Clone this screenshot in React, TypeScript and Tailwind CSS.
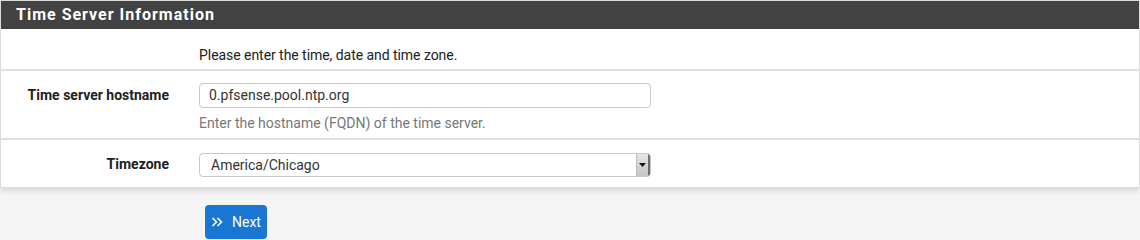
export default function App() {
	return (
		<div
			className="w-[1140px] h-[240px] bg-[#f5f5f5] text-[14px] text-[#212121] overflow-hidden"
			style={{ fontFamily: 'Roboto, "Liberation Sans", sans-serif' }}
		>
			<div className="w-[1140px] bg-white border border-[#dcdcdc] shadow-[0_3px_6px_rgba(0,0,0,0.12)]">
				<div className="h-[28px] bg-[#424242] px-[15px] flex items-center">
					<h2 className="text-[16px] font-bold text-white tracking-[1px] leading-none">
						Time Server Information
					</h2>
				</div>

				<div className="flex pt-[16px] pb-[4px] border-b-2 border-[#e0e0e0] leading-[20px]">
					<div className="w-[198px] shrink-0"></div>
					<div className="tracking-[-0.05px]">Please enter the time, date and time zone.</div>
				</div>

				<div className="flex pt-[12px] pb-[5px] border-b-2 border-[#e0e0e0]">
					<div className="w-[198px] shrink-0 pr-[30px] pt-[2px] text-right font-bold leading-[20px]">
						Time server hostname
					</div>
					<div className="w-[452px]">
						<div className="h-[25px] border border-[#c8c8c8] rounded-[4px] px-[9px] flex items-center text-[#333]">
							0.pfsense.pool.ntp.org
						</div>
						<div className="mt-[5px] leading-[20px] text-[#777]">
							Enter the hostname (FQDN) of the time server.
						</div>
					</div>
				</div>

				<div className="flex pt-[13px] pb-[10px]">
					<div className="w-[198px] shrink-0 pr-[30px] pt-[1px] text-right font-bold leading-[20px]">
						Timezone
					</div>
					<div className="w-[452px] h-[24px] border border-[#c8c8c8] rounded-[4px] flex items-stretch overflow-hidden">
						<div className="flex-1 pl-[11px] flex items-center text-[#333]">
							America/Chicago
						</div>
						<div className="w-[14px] bg-gradient-to-b from-[#e6e6e6] to-[#c4c4c4] border-l border-[#bdbdbd] border-r-2 border-r-[#6e6e6e] flex items-center justify-center">
							<svg width="7" height="4" viewBox="0 0 7 4">
								<path d="M0 0h7L3.5 4z" fill="#111" />
							</svg>
						</div>
					</div>
				</div>
			</div>

			<div className="pl-[205px] pt-[17px]">
				<button className="h-[34px] px-[6px] rounded-[4px] bg-[#1976d2] text-white flex items-center gap-[9px]">
					<svg width="12" height="12" viewBox="0 0 12 12" fill="none" stroke="white" strokeWidth="1.6">
						<path d="M1.5 2l4 4-4 4M6.5 2l4 4-4 4" />
					</svg>
					<span className="text-[14px]">Next</span>
				</button>
			</div>
		</div>
	);
}
